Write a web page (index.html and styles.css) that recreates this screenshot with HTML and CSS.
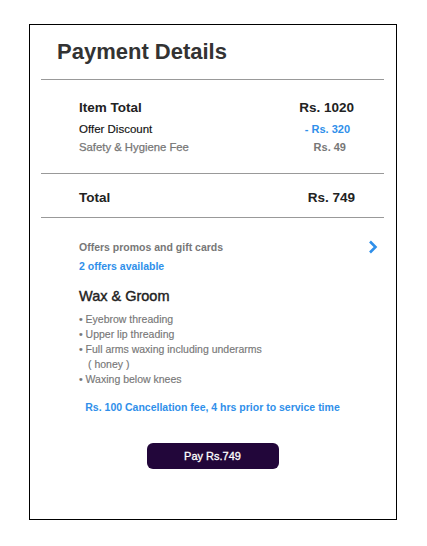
FILE: index.html
```html
<!DOCTYPE html>
<html>
<head>
<meta charset="utf-8">
<link rel="stylesheet" href="styles.css">
</head>
<body>
<div class="card">
  <h1 class="title">Payment Details</h1>
  <hr class="rule">
  <div class="summary">
    <div class="row row-main"><span>Item Total</span><span>Rs. 1020</span></div>
    <div class="row row-discount"><span>Offer Discount</span><span class="blue">- Rs. 320</span></div>
    <div class="row row-fee"><span>Safety &amp; Hygiene Fee</span><span class="fee-val">Rs. 49</span></div>
  </div>
  <hr class="rule">
  <div class="row row-total"><span>Total</span><span>Rs. 749</span></div>
  <hr class="rule">
  <div class="offers">
    <div class="offers-text">
      <div class="offers-label">Offers promos and gift cards</div>
      <div class="offers-count">2 offers available</div>
    </div>
    <svg class="chev" width="10" height="14" viewBox="0 0 10 14"><path d="M2 1.5 L7.5 7 L2 12.5" fill="none" stroke="#2f8fea" stroke-width="2.6"/></svg>
  </div>
  <h2 class="service">Wax &amp; Groom</h2>
  <ul class="items">
    <li>• Eyebrow threading</li>
    <li>• Upper lip threading</li>
    <li>• Full arms waxing including underarms</li>
    <li class="sub">( honey )</li>
    <li>• Waxing below knees</li>
  </ul>
  <p class="cancel">Rs. 100 Cancellation fee, 4 hrs prior to service time</p>
  <div class="pay-wrap"><button class="pay">Pay Rs.749</button></div>
</div>
</body>
</html>
```
FILE: styles.css
```css
html, body { margin: 0; padding: 0; background: #fff; }
body { font-family: "Liberation Sans", Arial, sans-serif; padding: 24px 0 0 29px; }
.card {
  height: 494px;
  border: 1px solid #000;
  box-sizing: content-box;
  padding: 0 12px 0 11px;
  width: 343px;
}
.title {
  margin: 0;
  padding: 14px 0 0 16px;
  font-size: 22px;
  line-height: 26px;
  font-weight: bold;
  color: #333;
  height: 40px;
}
.rule { margin: 0; border: 0; border-top: 1px solid #999; }
.summary { padding: 19px 29px 17px 38px; }
.row { display: flex; justify-content: space-between; align-items: baseline; }
.row-main { font-size: 13.5px; font-weight: bold; color: #222; line-height: 18px; }
.row-main span:last-child { padding-right: 1px; }
.row-discount { font-size: 11.5px; color: #111; line-height: 18px; margin-top: 3px; padding-right: 5px; -webkit-text-stroke: 0.15px #111; }
.blue { color: #2f8fea; font-weight: bold; font-size: 11px; -webkit-text-stroke: 0; }
.row-fee { font-size: 11.3px; color: #777; line-height: 18px; padding-right: 9px; -webkit-text-stroke: 0.25px #777; }
.fee-val { font-weight: bold; font-size: 11px; -webkit-text-stroke: 0; }
.row-total { padding: 14px 29px 9px 38px; font-size: 13.5px; font-weight: bold; color: #222; line-height: 20px; }
.offers { display: flex; justify-content: space-between; align-items: flex-start; padding: 22px 6px 0 38px; }
.offers-label { font-size: 10.5px; font-weight: bold; color: #777; line-height: 15px; }
.offers-count { font-size: 10.5px; font-weight: bold; color: #2f8fea; line-height: 15px; margin-top: 4px; }
.chev { margin-top: 0; }
.service { margin: 12px 0 0 38px; font-size: 14.5px; font-weight: normal; color: #222; line-height: 20px; -webkit-text-stroke: 0.4px #222; }
.items { list-style: none; margin: 6px 0 0 38px; padding: 0; font-size: 10.5px; color: #777; line-height: 15px; -webkit-text-stroke: 0.15px #777; }
.items .sub { padding-left: 9px; }
.cancel { margin: 13px 0 0; text-align: center; font-size: 10.5px; font-weight: bold; color: #2f8fea; line-height: 15px; }
.pay-wrap { display: flex; justify-content: center; margin-top: 28px; }
.pay {
  width: 132px; height: 26px; border: 0; border-radius: 6px;
  background: #22063a; color: #fff; font-family: "Liberation Sans", Arial, sans-serif;
  font-size: 11px; font-weight: normal; -webkit-text-stroke: 0.3px #fff; cursor: pointer;
}
```
